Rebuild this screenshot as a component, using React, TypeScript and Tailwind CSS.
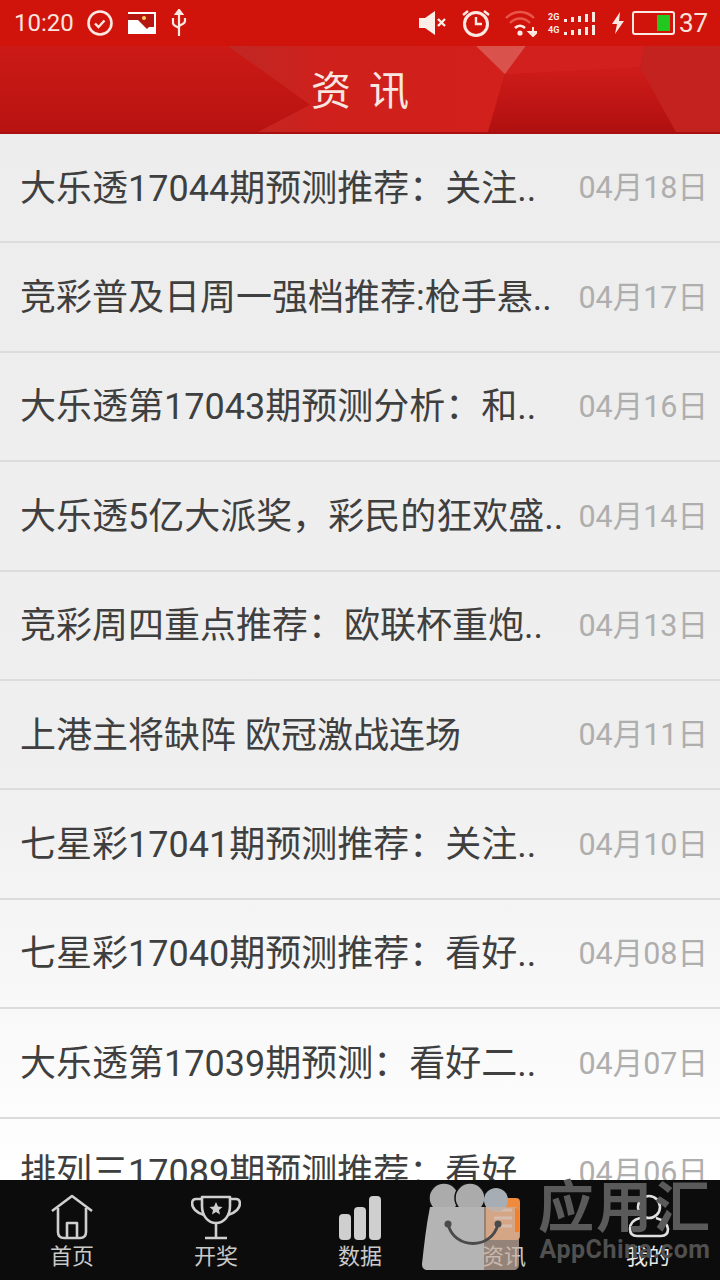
const news = [
  { title: "大乐透17044期预测推荐：关注..", date: "04月18日" },
  { title: "竞彩普及日周一强档推荐:枪手悬..", date: "04月17日" },
  { title: "大乐透第17043期预测分析：和..", date: "04月16日" },
  { title: "大乐透5亿大派奖，彩民的狂欢盛..", date: "04月14日" },
  { title: "竞彩周四重点推荐：欧联杯重炮..", date: "04月13日" },
  { title: "上港主将缺阵 欧冠激战连场", date: "04月11日" },
  { title: "七星彩17041期预测推荐：关注..", date: "04月10日" },
  { title: "七星彩17040期预测推荐：看好..", date: "04月08日" },
  { title: "大乐透第17039期预测：看好二..", date: "04月07日" },
  { title: "排列三17089期预测推荐：看好..", date: "04月06日" },
];

function StatusLeft() {
  return (
    <div className="flex items-center">
      <span className="text-[24px] leading-none text-[#fbe3dc] w-[72px] ml-[14px]">10:20</span>
      <svg className="w-[28px] h-[28px]" viewBox="0 0 28 28" fill="none" stroke="#fbe9e2">
        <circle cx="14" cy="14" r="11.5" strokeWidth="2.6" />
        <path d="M9 14.5l3.5 3.500 6-6.500" strokeWidth="2.4" />
      </svg>
      <svg className="w-[28px] h-[22px] ml-[14px]" viewBox="0 0 28 22">
        <rect width="28" height="22" fill="#fff" />
        <path d="M0 2h26v13h-5l-2 2-9-9H0z" fill="#b5160f" />
        <circle cx="16" cy="6" r="2" fill="#f6d65a" />
        <path d="M2 8l10 8v4H2z" fill="#fff" />
      </svg>
      <svg className="w-[18px] h-[28px] ml-[14px]" viewBox="0 0 18 28" fill="none" stroke="#fbe9e2" strokeWidth="2.2">
        <path d="M9 3v24" />
        <path d="M9 1l3 4H6z" fill="#fbe9e2" />
        <path d="M3 9v5c0 3 3 3 6 5" />
        <path d="M15 9v3c0 3-3 3-6 5" />
      </svg>
    </div>
  );
}

function StatusRight() {
  return (
    <div className="flex items-center mr-[14px]">
      <svg className="w-[28px] h-[24px]" viewBox="0 0 28 24" fill="#fdeee8">
        <path d="M0 7h6l10-7v24L6 17H0z" />
        <path d="M19 8l7 7M26 8l-7 7" stroke="#fdeee8" strokeWidth="2.4" />
      </svg>
      <svg className="w-[30px] h-[30px] ml-[14px]" viewBox="0 0 30 30" fill="none" stroke="#fbe9e2">
        <circle cx="15" cy="16" r="11.5" strokeWidth="3" />
        <path d="M15 9v7h6" strokeWidth="2.4" />
        <path d="M2 7l5-4M28 7l-5-4" strokeWidth="2.4" />
      </svg>
      <svg className="w-[32px] h-[28px] ml-[14px]" viewBox="0 0 32 28" fill="none">
        <path d="M1 9c8-8 20-8 28 0" stroke="#e8564a" strokeWidth="2.4" />
        <path d="M5 14c6-6 14-6 20 0" stroke="#e8564a" strokeWidth="2.4" />
        <path d="M10 19c3-3 7-3 10 0" stroke="#fbe9e2" strokeWidth="2.6" />
        <circle cx="15" cy="24" r="2.6" fill="#fbe9e2" />
        <path d="M28 18v9M24 23h8l-4 4z" stroke="#fbe9e2" strokeWidth="2" />
      </svg>
      <div className="flex flex-col ml-[11px] w-[50px] gap-[3px]">
        <SignalRow label="2G" />
        <SignalRow label="4G" />
      </div>
      <svg className="w-[14px] h-[22px] ml-[13px]" viewBox="0 0 14 22" fill="#fbe9e2">
        <path d="M9 0L1 12h5l-2 10 9-13H8z" />
      </svg>
      <div className="ml-[7px] w-[43px] h-[24px] rounded-[3px] border-[2.5px] border-[#fbe9e2] flex justify-end items-stretch p-[2px] pr-[3px]">
        <div className="w-[13px] bg-[#22c81f]" />
      </div>
      <span className="text-[26px] leading-none text-[#fbe3dc] ml-[4px] w-[27px]">37</span>
    </div>
  );
}

function SignalRow({ label }: { label: string }) {
  return (
    <div className="flex items-end h-[10px]">
      <span className="text-[9px] leading-[10px] font-bold text-[#fbe9e2] w-[14px]">{label}</span>
      <div className="flex items-end gap-[4px] ml-[2px]">
        <div className="w-[3px] h-[3px] bg-[#fbe9e2]" />
        <div className="w-[3px] h-[5px] bg-[#fbe9e2]" />
        <div className="w-[3px] h-[6px] bg-[#fbe9e2]" />
        <div className="w-[3px] h-[8px] bg-[#fbe9e2]" />
        <div className="w-[3px] h-[10px] bg-[#fbe9e2]" />
      </div>
    </div>
  );
}

function HeaderArt() {
  return (
    <svg className="absolute inset-0 w-full h-full" viewBox="0 0 720 88" preserveAspectRatio="none">
      <defs>
        <linearGradient id="band" x1="0" x2="1" y1="0" y2="0">
          <stop offset="0" stopColor="#bf2824" />
          <stop offset="0.35" stopColor="#cf201c" />
          <stop offset="1" stopColor="#d2201c" />
        </linearGradient>
        <linearGradient id="well" x1="0" x2="0" y1="0" y2="1">
          <stop offset="0" stopColor="#cf1c1a" />
          <stop offset="1" stopColor="#b01010" />
        </linearGradient>
      </defs>
      <path d="M228 0h248l29 28-17 60H258l52-28z" fill="url(#band)" />
      <path d="M476 0h50l-21 29z" fill="#d9524c" />
      <path d="M526 0h118l-4 22-135 7z" fill="#d2201e" />
      <path d="M505 29l135-7 36 66H488z" fill="url(#well)" />
      <path d="M644 0h76v88h-44l-36-66z" fill="#c4221f" />
    </svg>
  );
}

function HomeIcon() {
  return (
    <svg className="w-[44px] h-[46px]" viewBox="0 0 44 46" fill="none" stroke="#cfcfcf" strokeWidth="2.6" strokeLinejoin="round">
      <path d="M2 17L22 2l20 15" />
      <path d="M8 14v24c0 4 2 6 6 6h16c4 0 6-2 6-6V14" />
      <path d="M17 44V29h10v15" />
    </svg>
  );
}

function TrophyIcon() {
  return (
    <svg className="w-[50px] h-[46px]" viewBox="0 0 50 46" fill="none" stroke="#cfcfcf" strokeWidth="2.6" strokeLinejoin="round">
      <path d="M11 3h28v9c0 10-6 17-14 17S11 22 11 12z" />
      <path d="M11 5H5C0 5 0 12 4 16c2 2 5 4 9 5" />
      <path d="M39 5h6c5 0 5 7 1 11-2 2-5 4-9 5" />
      <path d="M25 29v14M14 44h22" />
      <path d="M25 8l2 4.500 4.500.5-3.500 3 1 4.500-4-2.500-4 2.500 1-4.500-3.500-3 4.500-.5z" fill="#cfcfcf" stroke="none" />
    </svg>
  );
}

function BarsIcon() {
  return (
    <div className="flex items-end gap-[3px] h-[46px]">
      <div className="w-[12px] h-[26px] rounded-[4px] bg-[#cfcfcf]" />
      <div className="w-[12px] h-[33px] rounded-[4px] bg-[#cfcfcf]" />
      <div className="w-[12px] h-[44px] rounded-[4px] bg-[#cfcfcf]" />
    </div>
  );
}

function DocIcon() {
  return (
    <svg className="w-[40px] h-[46px]" viewBox="0 0 40 46">
      <rect x="2" y="4" width="34" height="42" rx="4" fill="#f08a3c" />
      <path d="M10 16h18M10 24h18M10 32h18" stroke="#f7d8c0" strokeWidth="3" />
    </svg>
  );
}

function UserIcon() {
  return (
    <svg className="w-[44px] h-[46px]" viewBox="0 0 44 46" fill="none" stroke="#e0e0e0" strokeWidth="2.6">
      <circle cx="23" cy="13" r="11" />
      <path d="M14 24C6 26 4 31 4 35c0 5 3 7 7 7h24c4 0 7-2 7-7 0-4-4-9-12-11" />
    </svg>
  );
}

const tabs = [
  { label: "首页", icon: <HomeIcon />, color: "text-[#c9c9c9]" },
  { label: "开奖", icon: <TrophyIcon />, color: "text-[#c9c9c9]" },
  { label: "数据", icon: <BarsIcon />, color: "text-[#c9c9c9]" },
  { label: "资讯", icon: <DocIcon />, color: "text-[#c9c9c9]" },
  { label: "我的", icon: <UserIcon />, color: "text-[#e6e6e6]" },
];

// Translucent shopping-bag badge and wordmark sitting over the tab bar
function Badge() {
  return (
    <div className="absolute left-[422px] bottom-0 w-[298px] h-[100px] flex items-start pointer-events-none">
      <svg className="w-[100px] h-[92px] shrink-0" viewBox="0 0 100 92">
        <circle cx="22" cy="18" r="15" fill="#ababab" stroke="#111" strokeWidth="1.5" />
        <circle cx="48" cy="18" r="15" fill="#ababab" stroke="#111" strokeWidth="1.5" />
        <circle cx="74" cy="20" r="12" fill="#a7adb5" />
        <path d="M8 27h54v63H6c-4 0-6-2-6-6 2-18 4-38 8-57z" fill="#b4b4b4" />
        <path d="M62 27h30c3 0 5 2 5 5v52c0 4-2 6-6 6H62z" fill="#c9b2a4" fillOpacity="0.72" />
        <path d="M93 28c3 0 4 2 4 4v20h-4z" fill="#f0802c" />
        <path d="M26 44c6 26 44 26 50 0" fill="none" stroke="#4a4a4a" strokeWidth="3" />
        <circle cx="26" cy="44" r="3.500" fill="#4a4a4a" />
        <circle cx="76" cy="44" r="3.500" fill="#4a4a4a" />
      </svg>
      <div className="ml-[16px] flex flex-col items-center w-[174px]">
        <span className="text-[56px] leading-[56px] font-bold tracking-[2px] text-[#5a5a5a]">应用汇</span>
        <span className="text-[25px] leading-[28px] font-bold tracking-[0.5px] text-[#505050]">AppChina.com</span>
      </div>
    </div>
  );
}

export default function App() {
  return (
    <div className="w-[720px] h-[1280px] relative flex flex-col overflow-hidden font-['Roboto','Noto_Sans_CJK_SC',sans-serif]">
      <div className="h-[46px] bg-[#d0140c] flex items-center justify-between shrink-0">
        <StatusLeft />
        <StatusRight />
      </div>

      <header className="relative h-[88px] shrink-0 bg-gradient-to-b from-[#cc1a16] to-[#b81311] border-b-[2px] border-[#a81010] flex items-center justify-center">
        <HeaderArt />
        <h1 className="relative text-[40px] leading-none font-normal text-[#f8e6e0] tracking-[18px] pl-[18px] pt-[6px]">资讯</h1>
      </header>

      <ul className="flex-1 overflow-hidden bg-gradient-to-b from-[#ededed] via-[#efefef] via-60% to-white">
        {news.map((item) => (
          <li key={item.date} className="h-[109.4px] flex items-center justify-between pl-[20px] pr-[12px] pt-[2px] border-b-[2px] border-[#dcdcdc]">
            <span className="text-[36px] leading-none text-[#3f3f3f] whitespace-nowrap">{item.title}</span>
            <span className="text-[30.5px] leading-none text-[#aeaeae] whitespace-nowrap">{item.date}</span>
          </li>
        ))}
      </ul>

      <nav className="h-[100px] shrink-0 bg-[#0c0c0c] grid grid-cols-5">
        {tabs.map((tab) => (
          <div key={tab.label} className="flex flex-col items-center pt-[14px]">
            <div className="h-[46px] flex items-center justify-center">{tab.icon}</div>
            <span className={`text-[22px] leading-none mt-[6px] ${tab.color}`}>{tab.label}</span>
          </div>
        ))}
      </nav>

      <Badge />
    </div>
  );
}
